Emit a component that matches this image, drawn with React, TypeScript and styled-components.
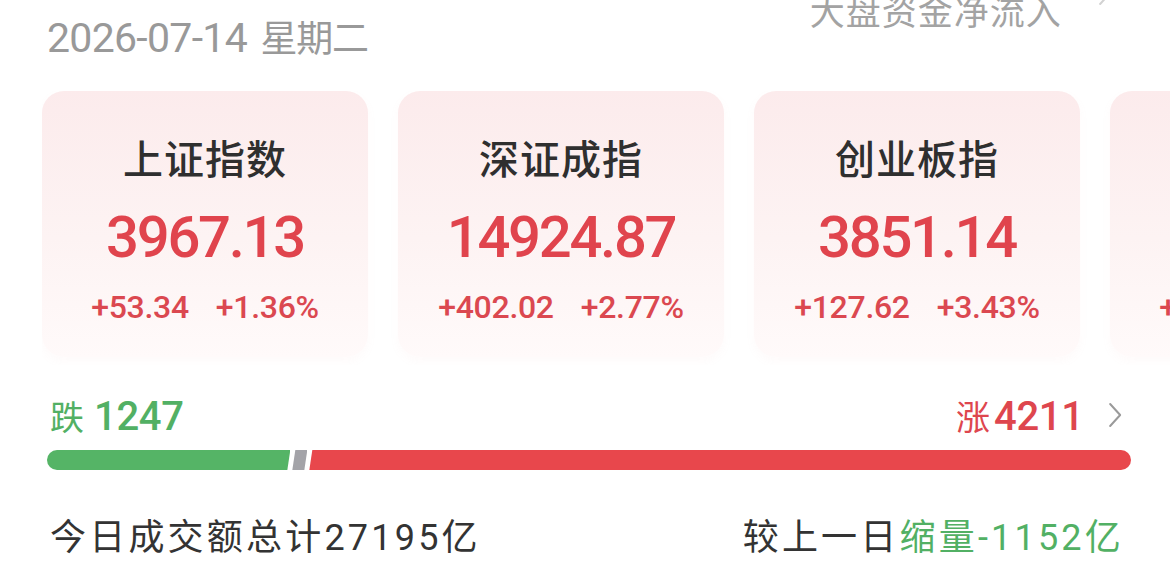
import React from "react";
import styled, { createGlobalStyle } from "styled-components";

const GlobalStyle = createGlobalStyle`
  * {
    box-sizing: border-box;
  }
  html, body {
    margin: 0;
    padding: 0;
    background: #fff;
    overflow: hidden;
  }
  body {
    font-family: Roboto, "Noto Sans CJK SC", sans-serif;
  }
`;

const Page = styled.div`
  width: 1170px;
  height: 570px;
  padding: 12px 39px 0 47px;
  overflow: hidden;
`;

const Header = styled.div`
  display: flex;
  justify-content: space-between;
  align-items: flex-start;
`;

const DateText = styled.div`
  color: #999;
  font-size: 41px;
  line-height: 48px;
  font-weight: 400;
  letter-spacing: -0.7px;
  white-space: nowrap;
`;

const Weekday = styled.span`
  font-family: "Noto Sans CJK SC", sans-serif;
  font-size: 37px;
  font-weight: 400;
  letter-spacing: -1.2px;
  margin-left: 4px;
`;

const FlowLink = styled.div`
  display: flex;
  align-items: flex-start;
  gap: 36px;
  margin-top: -22px;
  margin-right: 19px;
  color: #a3a3a3;
  font-family: "Noto Sans CJK SC", sans-serif;
  font-size: 35px;
  line-height: 40px;
  letter-spacing: 1px;

  svg {
    margin-top: -10px;
  }
`;

const CardsRow = styled.div`
  display: flex;
  gap: 30px;
  margin: 29px -39px 0 -5px;
  padding-bottom: 8px;
  overflow: hidden;
`;

const Card = styled.div`
  flex: 0 0 326px;
  height: 266px;
  padding-top: 42px;
  border-radius: 22px;
  background: linear-gradient(180deg, #fcebec 0%, #fdf3f3 55%, #fffafa 100%);
  box-shadow: 0 4px 10px rgba(235, 150, 150, 0.05);
  display: flex;
  flex-direction: column;
  align-items: center;
`;

const CardTitle = styled.div`
  font-family: "Noto Sans CJK SC", sans-serif;
  font-size: 40px;
  line-height: 48px;
  font-weight: 500;
  color: #2f2f2f;
  letter-spacing: 1px;
`;

const CardValue = styled.div<{ $up: boolean }>`
  margin-top: 24px;
  font-size: 58px;
  line-height: 64px;
  font-weight: 500;
  letter-spacing: -2.3px;
  color: ${(p) => (p.$up ? "#e0444d" : "#4cae62")};
`;

const CardChange = styled.div<{ $up: boolean }>`
  margin-top: 18px;
  display: flex;
  gap: 27px;
  font-size: 32px;
  line-height: 40px;
  font-weight: 500;
  letter-spacing: -0.3px;
  color: ${(p) => (p.$up ? "#db4850" : "#4cae62")};
  white-space: nowrap;
`;

const BreadthRow = styled.div`
  margin-top: 26px;
  display: flex;
  justify-content: space-between;
  align-items: center;
  padding: 0 9px 0 3px;
  height: 48px;
`;

const BreadthLabel = styled.div<{ $color: string }>`
  display: flex;
  align-items: baseline;
  gap: ${(p) => (p.$color === "green" ? "10px" : "4px")};
  color: ${(p) => (p.$color === "green" ? "#52b064" : "#de464e")};
`;

const BreadthWord = styled.span`
  font-family: "Noto Sans CJK SC", sans-serif;
  font-size: 34px;
`;

const BreadthCount = styled.span`
  font-size: 40px;
  font-weight: 500;
  letter-spacing: -0.3px;
`;

const RightGroup = styled.div`
  display: flex;
  align-items: center;
  gap: 24px;
`;

const Bar = styled.div`
  margin-top: 11px;
  display: flex;
  gap: 2px;
  height: 20px;
`;

const Segment = styled.div<{ $kind: "down" | "flat" | "up" }>`
  height: 100%;
  flex-basis: 0;
  background: ${(p) =>
    p.$kind === "down" ? "#55b466" : p.$kind === "flat" ? "#a3a3a8" : "#e8474c"};
  border-radius: ${(p) =>
    p.$kind === "down" ? "10px 0 0 10px" : p.$kind === "up" ? "0 10px 10px 0" : "0"};
  clip-path: ${(p) =>
    p.$kind === "down"
      ? "polygon(0 0, 100% 0, calc(100% - 3px) 100%, 0 100%)"
      : p.$kind === "flat"
      ? "polygon(3px 0, 100% 0, calc(100% - 3px) 100%, 0 100%)"
      : "polygon(3px 0, 100% 0, 100% 100%, 0 100%)"};
  ${(p) => (p.$kind === "flat" ? "flex: 0 0 15px;" : "")}
`;

const TurnoverRow = styled.div`
  margin-top: 44px;
  display: flex;
  justify-content: space-between;
  padding: 0 7px 0 3px;
  font-family: Roboto, "Noto Sans CJK SC", sans-serif;
  font-size: 36px;
  line-height: 48px;
  letter-spacing: 3.2px;
  color: #333;
  white-space: nowrap;
`;

const Shrink = styled.span`
  color: #52b064;
`;

const Chevron = ({ color, size }: { color: string; size: number }) => (
  <svg width={size * 0.55} height={size} viewBox="0 0 14 26" fill="none">
    <path d="M2 2 L12 13 L2 24" stroke={color} strokeWidth="2" strokeLinecap="round" strokeLinejoin="round" />
  </svg>
);

const indices = [
  { name: "上证指数", value: "3967.13", change: "+53.34", pct: "+1.36%", up: true },
  { name: "深证成指", value: "14924.87", change: "+402.02", pct: "+2.77%", up: true },
  { name: "创业板指", value: "3851.14", change: "+127.62", pct: "+3.43%", up: true },
  { name: "科创50", value: "1086.45", change: "+25.27", pct: "+2.43%", up: true },
];

const breadth = { down: 1247, flat: 96, up: 4211 };

const App = () => {
  return (
    <>
      <GlobalStyle />
      <Page>
        <Header>
          <DateText>
            2026-07-14 <Weekday>星期二</Weekday>
          </DateText>
          <FlowLink>
            大盘资金净流入
            <Chevron color="#d2d2d2" size={26} />
          </FlowLink>
        </Header>

        <CardsRow>
          {indices.map((item) => (
            <Card key={item.name}>
              <CardTitle>{item.name}</CardTitle>
              <CardValue $up={item.up}>{item.value}</CardValue>
              <CardChange $up={item.up}>
                <span>{item.change}</span>
                <span>{item.pct}</span>
              </CardChange>
            </Card>
          ))}
        </CardsRow>

        <BreadthRow>
          <BreadthLabel $color="green">
            <BreadthWord>跌</BreadthWord>
            <BreadthCount>{breadth.down}</BreadthCount>
          </BreadthLabel>
          <RightGroup>
            <BreadthLabel $color="red">
              <BreadthWord>涨</BreadthWord>
              <BreadthCount>{breadth.up}</BreadthCount>
            </BreadthLabel>
            <Chevron color="#9a9a9a" size={26} />
          </RightGroup>
        </BreadthRow>

        <Bar>
          <Segment $kind="down" style={{ flexGrow: breadth.down }} />
          <Segment $kind="flat" />
          <Segment $kind="up" style={{ flexGrow: breadth.up }} />
        </Bar>

        <TurnoverRow>
          <span>今日成交额总计27195亿</span>
          <span>
            较上一日<Shrink>缩量-1152亿</Shrink>
          </span>
        </TurnoverRow>
      </Page>
    </>
  );
};

export default App;
